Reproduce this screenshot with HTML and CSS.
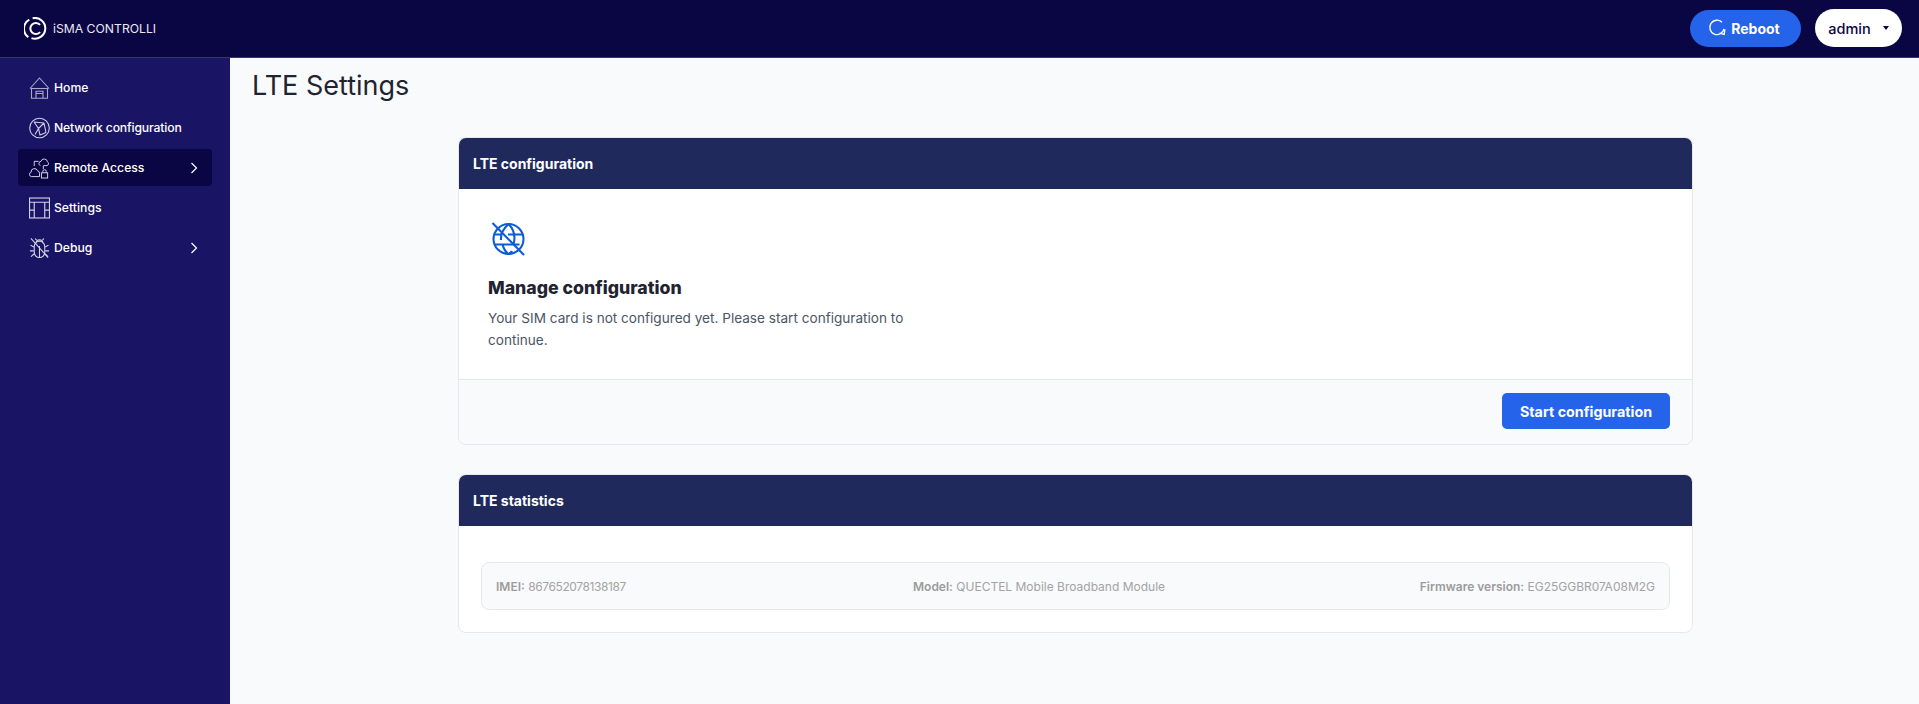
FILE: index.html
```html
<!DOCTYPE html>
<html lang="en">
<head>
<meta charset="utf-8">
<title>LTE Settings</title>
<link rel="stylesheet" href="styles.css">
</head>
<body>
<header class="topbar">
  <div class="brand">
    <svg class="brand-logo" viewBox="0 0 24 24" fill="none" stroke="#fff" stroke-width="2.100"><path d="M5.500 2.800A10.800 10.800 0 0 0 4.500 21"/><path d="M9 1.300A10.800 10.800 0 1 1 7.800 22"/><path d="M16.800 8.200A5.800 5.800 0 1 0 16.800 15.800"/></svg>
    <span>iSMA CONTROLLI</span>
  </div>
  <div class="top-actions">
    <button class="reboot"><svg class="reboot-icon" viewBox="0 0 20 20" fill="none" stroke="#fff" stroke-width="1.500"><path d="M15.500 3.500A8 8 0 1 0 17.800 11"/><path d="M18.800 11.500 18 17.200 12.800 15.800"/></svg>Reboot</button>
    <button class="user">admin<span class="caret"></span></button>
  </div>
</header>
<div class="shell">
  <nav class="sidebar">
    <a class="nav-item"><svg class="nav-icon" viewBox="0 0 21 22" fill="none" stroke="#aaa8cf" stroke-width="1.100"><path d="M1 11.500 10.500 1 20 11.500"/><path d="M1.500 11.500h18"/><path d="M2.500 11.500v9.800h16v-9.800"/><path d="M7 21.300v-7h7v7M7 16.500h7"/></svg><span>Home</span></a>
    <a class="nav-item"><svg class="nav-icon" viewBox="0 0 21 21" fill="none" stroke="#d0cfe6" stroke-width="1.100"><circle cx="10.500" cy="10.500" r="9.800"/><path d="M5 4.500 9.500 11l-3.500 6M9.500 11 15 5.500M9.500 11l1.500 6.500 6-2.500M15 5.500l2 9.500M5 4.500 15 5.500"/></svg><span class="nav-tight">Network configuration</span></a>
    <a class="nav-item active"><svg class="nav-icon" viewBox="0 0 22 22" fill="none" stroke="#d8d7ea" stroke-width="1"><path d="M10 4H5.500v5"/><path d="M12 8.500a2.300 2.300 0 0 1 .5-4.500 3.500 3.500 0 0 1 6.800.5 2.200 2.200 0 0 1-.3 4H15"/><path d="M15 9v3"/><path d="M2.500 20a2.300 2.300 0 0 1-.3-4.500A3.500 3.500 0 0 1 9 14a2.500 2.500 0 0 1 2 2.600V20z"/><rect x="13" y="16" width="6.500" height="5.500"/><path d="M14.500 16v-1.500a1.700 1.700 0 0 1 3.500 0V16"/></svg><span>Remote Access</span><svg class="chev" viewBox="0 0 8 12" fill="none" stroke="#fff" stroke-width="1.200"><path d="M1.500 1 6.500 6l-5 5"/></svg></a>
    <a class="nav-item"><svg class="nav-icon" viewBox="0 0 20 20" fill="none" stroke="#d0cfe6" stroke-width="1.100"><rect x=".5" y=".5" width="19" height="19"/><path d="M.5 4.500h19M.5 12h4.500M15 12h4.500M5 4.500v15M15 4.500v15"/></svg><span>Settings</span></a>
    <a class="nav-item"><svg class="nav-icon" viewBox="0 0 22 22" fill="none" stroke="#d8d7ea" stroke-width="1.100"><path d="M2 1l18 20"/><path d="M7 6.500a4 4 0 0 1 8 0M5.500 9.500a5.500 5.500 0 0 1 11 0v6a5.500 5.500 0 0 1-11 0zM11 9v12"/><path d="M5 10 1.500 8M17 10l3.500-2M5 14H1M17 14h4M5.500 17 2 20M16.500 17l3.500 3M8 3 6.500 1M14 3l1.500-2"/></svg><span>Debug</span><svg class="chev" viewBox="0 0 8 12" fill="none" stroke="#fff" stroke-width="1.200"><path d="M1.500 1 6.500 6l-5 5"/></svg></a>
  </nav>
  <main class="content">
    <h1 class="page-title">LTE Settings</h1>
    <div class="cards">
      <section class="card">
        <h2 class="card-head">LTE configuration</h2>
        <div class="card-body">
          <svg class="globe" viewBox="0 0 34 34" fill="none" stroke="#0b5cd7" stroke-width="2.100"><circle cx="17.500" cy="17" r="15"/><path d="M3 12.500h7M17 12.500h15M3.500 22.500h25"/><path d="M17.500 2C11 8 9.500 13 10 18M17.500 2c4 4 6 9 6 14 0 2-.3 4-1 6M17.500 32c-3-2-5-5.500-6-10M17.500 32c2-1 3-2 3.500-3"/><path d="M1.500 1 33 33"/></svg>
          <h3 class="manage-title">Manage configuration</h3>
          <p class="manage-text">Your SIM card is not configured yet. Please start configuration to continue.</p>
        </div>
        <div class="card-foot"><button class="primary">Start configuration</button></div>
      </section>
      <section class="card">
        <h2 class="card-head">LTE statistics</h2>
        <div class="stats-wrap">
          <div class="stats">
            <span><b>IMEI:</b> <span class="imei">867652078138187</span></span>
            <span><b>Model:</b> QUECTEL Mobile Broadband Module</span>
            <span><b>Firmware version:</b> EG25GGBR07A08M2G</span>
          </div>
        </div>
      </section>
    </div>
  </main>
</div>
</body>
</html>
```
FILE: styles.css
```css
* { box-sizing: border-box; }
html, body { margin: 0; height: 100%; overflow: hidden; }
body { font-family: Inter, "Noto Sans", sans-serif; background: #f9fafb; color: #1f2430; display: flex; flex-direction: column; }
button { font-family: inherit; border: 0; cursor: pointer; }

.topbar { height: 58px; flex: none; background: #0a0543; border-bottom: 1px solid #3a3667; display: flex; align-items: center; justify-content: space-between; padding: 0 17px 1px 24px; }
.brand { display: flex; align-items: center; gap: 6px; color: #e9e9f3; font-size: 12.200px; }
.brand-logo { width: 23px; height: 23px; }
.top-actions { display: flex; align-items: center; gap: 14px; }
.reboot { height: 37px; width: 111px; padding: 0 3px 0 0; border-radius: 19px; background: #2563eb; color: #fff; font-size: 14px; font-weight: 700; display: flex; align-items: center; justify-content: center; gap: 5px; }
.reboot-icon { width: 18px; height: 18px; }
.user { height: 38px; width: 87px; padding: 0 0 0 0; border-radius: 19px; background: #fff; color: #0a0543; font-size: 14.500px; font-weight: 500; display: flex; align-items: center; justify-content: center; gap: 12px; }
.caret { width: 0; height: 0; border-left: 3.500px solid transparent; border-right: 3.500px solid transparent; border-top: 4px solid #0a0543; }

.shell { flex: 1; display: flex; min-height: 0; }
.sidebar { width: 230px; flex: none; background: #1a1464; padding: 11px 18px; display: flex; flex-direction: column; gap: 3px; }
.nav-item { height: 37px; display: flex; align-items: center; gap: 4px; padding: 0 11px; border-radius: 4px; color: #fff; font-size: 12.200px; font-weight: 500; }
.nav-item.active { background: #0a0543; }
.nav-icon { width: 21px; height: 22px; flex: none; }
.nav-tight { letter-spacing: -0.150px; }
.chev { width: 8px; height: 12px; margin-left: auto; margin-right: 3px; }

.content { flex: 1; min-width: 0; padding: 10px 0 0 2px; }
.page-title { margin: 0 0 0 20px; font-size: 27px; font-weight: 400; line-height: 36px; color: #1f2430; }
.cards { width: 1235px; margin: 33px auto 0; display: flex; flex-direction: column; gap: 29px; }
.card { border: 1px solid #e5e7eb; border-radius: 8px; background: #fff; overflow: hidden; }
.card-head { margin: 0; height: 51px; background: #20295b; color: #fff; font-size: 14px; font-weight: 700; display: flex; align-items: center; padding: 0 14px; }
.card-body { height: 190px; padding: 33px 28px 0 29px; }
.globe { display: block; width: 34px; height: 34px; margin-left: 3px; }
.manage-title { margin: 20px 0 0; font-size: 17.700px; font-weight: 800; line-height: 24px; color: #1f2430; }
.manage-text { margin: 8px 0 0; width: 430px; font-size: 13.600px; line-height: 21.500px; color: #4b5563; }
.card-foot { height: 65px; padding: 0 22px 2px; background: #f9fafb; border-top: 1px solid #e5e7eb; display: flex; align-items: center; justify-content: flex-end; }
.primary { width: 168px; height: 36px; border-radius: 5px; background: #2563eb; color: #fff; font-size: 14.300px; font-weight: 700; }
.stats-wrap { padding: 36px 22px 22px 22px; }
.stats { height: 48px; border: 1px solid #e5e7eb; border-radius: 8px; background: #f9fafb; display: grid; grid-template-columns: 417px 1fr auto; align-items: center; padding: 0 14px; font-size: 12px; color: #a3a3a3; }
.stats b { font-weight: 600; color: #9c9c9c; }
.imei { letter-spacing: -0.400px; }
```
